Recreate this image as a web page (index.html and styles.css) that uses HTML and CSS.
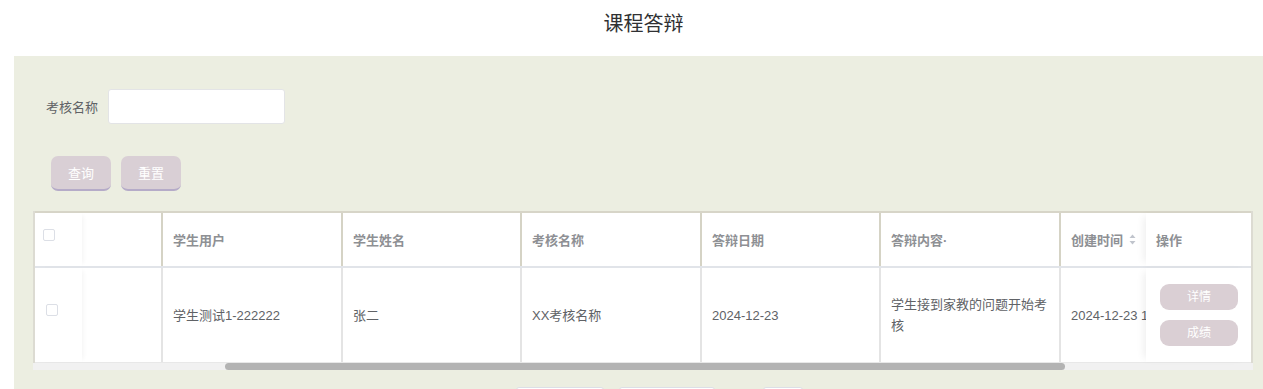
FILE: index.html
```html
<!DOCTYPE html>
<html lang="zh-CN">
<head>
    <meta charset="utf-8">
    <title>课程答辩</title>
    <link rel="stylesheet" href="styles.css">
</head>
<body>
<h1 class="title">课程答辩</h1>
<section class="panel">
    <form class="search">
        <label class="field">
            <span>考核名称</span>
            <input type="text" name="examName">
        </label>
        <div class="actions">
            <button type="button" class="btn">查询</button>
            <button type="reset" class="btn">重置</button>
        </div>
    </form>

    <div class="table">
        <div class="row head">
            <div class="cell sel"><span class="check"></span></div>
            <div class="cell"></div>
            <div class="cell line">学生用户</div>
            <div class="cell line">学生姓名</div>
            <div class="cell line">考核名称</div>
            <div class="cell line">答辩日期</div>
            <div class="cell line">答辩内容·</div>
            <div class="cell line clip">创建时间
                <svg class="sort" viewBox="0 0 7 11" width="7" height="11">
                    <path d="M3.5 0.5 L6.5 4 L0.5 4 Z" />
                    <path d="M3.5 10.5 L6.5 7 L0.5 7 Z" />
                </svg>
            </div>
            <div class="cell ops">操作</div>
        </div>
        <div class="row body">
            <div class="cell sel"><span class="check"></span></div>
            <div class="cell"></div>
            <div class="cell line">学生测试1-222222</div>
            <div class="cell line">张二</div>
            <div class="cell line">XX考核名称</div>
            <div class="cell line">2024-12-23</div>
            <div class="cell line">学生接到家教的问题开始考核</div>
            <div class="cell line clip">2024-12-23 13:20:11</div>
            <div class="cell ops">
                <button type="button" class="op">详情</button>
                <button type="button" class="op">成绩</button>
            </div>
        </div>
    </div>
    <div class="scrollbar"><div class="thumb"></div></div>

    <!-- pagination sits below the fold; only its top edge shows -->
    <div class="pager">
        <span class="box size"></span>
        <span class="box pages"></span>
        <span class="box jump"></span>
    </div>
</section>
</body>
</html>
```

FILE: styles.css
```css
/* Page */
html, body {
    margin: 0;
    height: 100%;
    overflow: hidden;
    background: #fff;
    font-family: "Liberation Sans", "Noto Sans CJK SC", sans-serif;
    font-size: 13px;
    color: #606266;
}
.title {
    margin: 0;
    height: 56px;
    padding-left: 24px;
    line-height: 48px;
    text-align: center;
    font-size: 20px;
    font-weight: normal;
    color: #303133;
}
.panel {
    margin-left: 14px;
    min-height: 400px;
    padding: 33px 0 0 19px;
    background: #eceee1;
}

/* Search form */
.search {
    display: flex;
    flex-direction: column;
    gap: 32px;
}
.field {
    display: flex;
    align-items: center;
    gap: 10px;
    margin-left: 13px;
    color: #606266;
}
.field input {
    box-sizing: border-box;
    width: 177px;
    height: 35px;
    border: 1px solid #e3e4e6;
    border-radius: 3px;
    background: #fff;
}
.actions {
    display: flex;
    gap: 10px;
    margin-left: 18px;
}
.btn {
    width: 60px;
    height: 35px;
    border: none;
    border-bottom: 2px solid #b5abc8;
    border-radius: 7px;
    background: #d9cfd5;
    color: #fff;
    font: inherit;
    padding: 0;
}

/* Table */
.table {
    width: 1220px;
    margin-top: 20px;
    background: #fff;
    box-sizing: border-box;
    border-left: 2px solid #dcdbd2;
    border-right: 2px solid #dcdbd2;
}
.row {
    display: grid;
    grid-template-columns: 47px 79px 180px 179px 180px 179px 180px 87px 105px;
}
.head {
    height: 53px;
    border-top: 2px solid #d7d5c8;
    border-bottom: 2px solid #e1e4e9;
    color: #8e9094;
    font-weight: bold;
}
.body {
    height: 94px;
    border-bottom: 1px solid #e8e8e8;
    line-height: 21px;
}
.cell {
    display: flex;
    align-items: center;
    padding: 0 10px;
    min-width: 0;
}
.head .line {
    border-left: 2px solid #d5d3c5;
}
.body .line {
    border-left: 2px solid #e4e4e4;
}
.sel {
    align-items: flex-start;
    padding: 16px 0 0 8px;
    box-shadow: 4px 0 5px -3px rgba(0, 0, 0, 0.05);
}
.body .sel {
    padding: 36px 0 0 11px;
}
.check {
    display: block;
    width: 10px;
    height: 10px;
    border: 1px solid #dcdfe6;
    border-radius: 2px;
    background: #fff;
}
.clip {
    overflow: hidden;
    white-space: nowrap;
}
.sort {
    margin-left: 6px;
    fill: #c0c4cc;
    flex: none;
}
.ops {
    background: #fff;
    box-shadow: -6px 0 8px -4px rgba(0, 0, 0, 0.07);
}
.body .ops {
    flex-direction: column;
    align-items: flex-start;
    justify-content: center;
    gap: 10px;
    padding-left: 14px;
}
.op {
    width: 78px;
    height: 26px;
    border: none;
    border-radius: 9px;
    background: #dacfd4;
    color: #fff;
    font: inherit;
    font-size: 12px;
    padding: 0;
}

/* Fake horizontal scrollbar */
.scrollbar {
    width: 1220px;
    height: 7px;
    background: #f1f1f1;
}
.thumb {
    width: 840px;
    height: 7px;
    margin-left: 192px;
    border-radius: 4px;
    background: #b3b3b3;
}

/* Pagination */
.pager {
    display: flex;
    gap: 15px;
    margin: 17px 0 0 483px;
}
.box {
    box-sizing: border-box;
    height: 28px;
    border: 1px solid #dcdfe6;
    border-radius: 3px;
    background: #fff;
}
.size { width: 88px; }
.pages { width: 96px; }
.jump { width: 40px; margin-left: 33px; }
```
